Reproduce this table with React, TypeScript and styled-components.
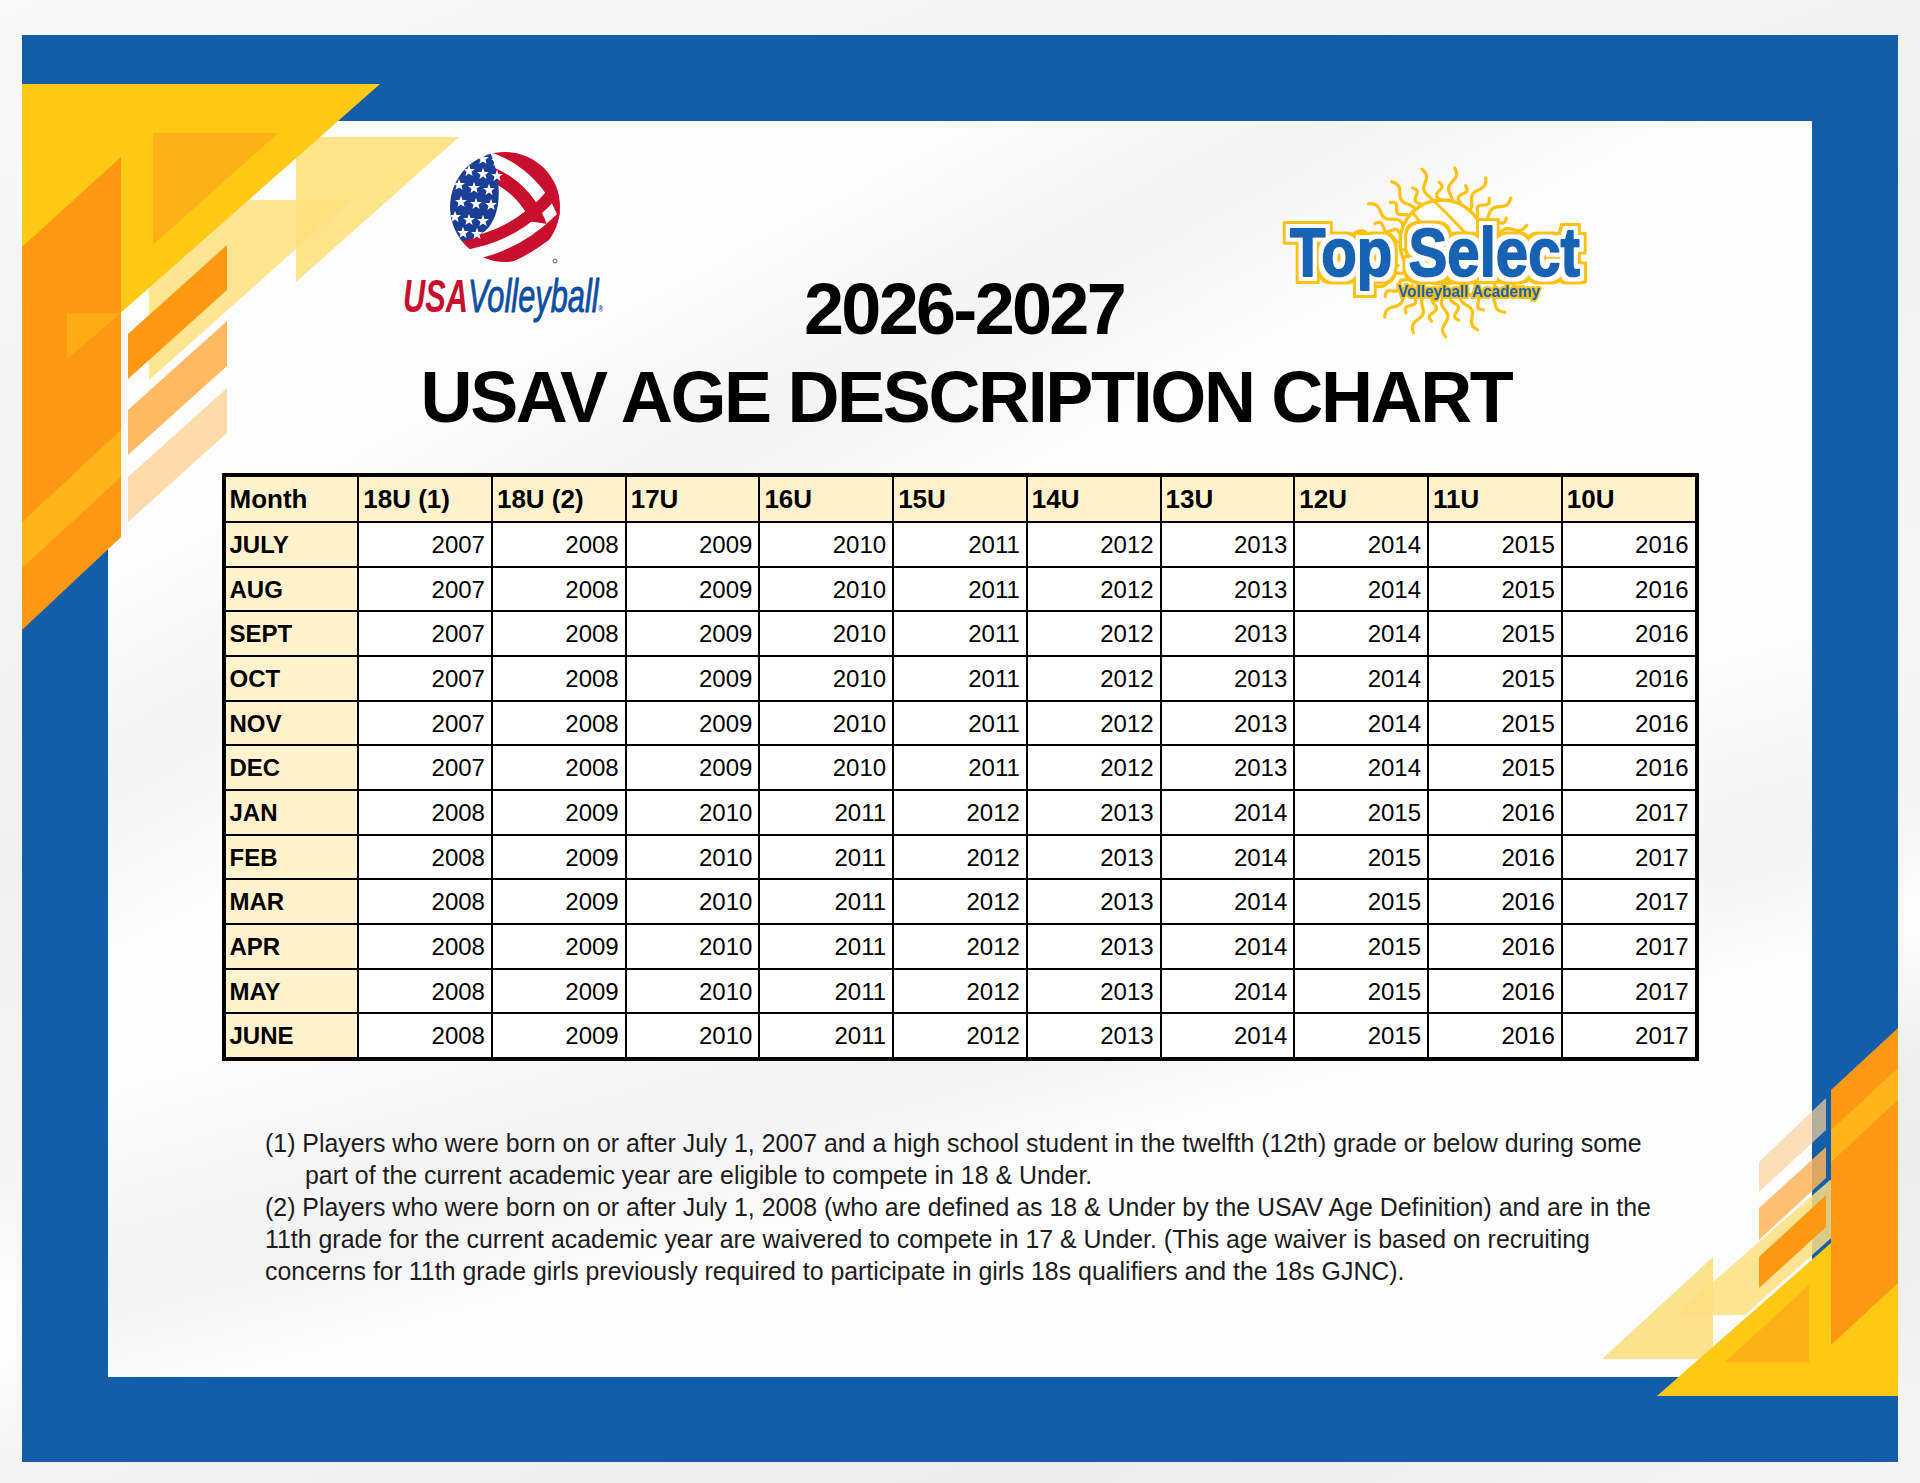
import React from 'react';
import styled, { createGlobalStyle } from 'styled-components';

const GlobalStyle = createGlobalStyle`
  html, body {
    margin: 0;
    padding: 0;
  }
  body {
    font-family: 'Liberation Sans', Arial, sans-serif;
    background: #f4f4f4;
    color: #000;
  }
`;

const Page = styled.div`
  position: relative;
  width: 1920px;
  height: 1483px;
  box-sizing: border-box;
  padding: 35px 22px 21px 22px;
  overflow: hidden;
  background:
    linear-gradient(168deg, rgba(255, 255, 255, 0) 62%, rgba(255, 255, 255, 0.9) 70%, rgba(255, 255, 255, 0) 78%),
    linear-gradient(160deg, #f9f9f9 0%, #f1f1f1 40%, #f7f7f7 60%, #ececec 85%, #f6f6f6 100%);
`;

const Frame = styled.div`
  height: 100%;
  box-sizing: border-box;
  background: #135eaa;
  padding: 86px 86px 85px 86px;
`;

const Panel = styled.div`
  height: 100%;
  display: flex;
  flex-direction: column;
  align-items: center;
  background:
    linear-gradient(152deg, rgba(0, 0, 0, 0) 20%, rgba(0, 0, 0, 0.035) 30%, rgba(0, 0, 0, 0) 40%),
    linear-gradient(165deg, rgba(0, 0, 0, 0) 55%, rgba(0, 0, 0, 0.04) 68%, rgba(0, 0, 0, 0) 76%),
    #fdfdfd;
`;

const Decor = styled.svg`
  position: absolute;
  left: 0;
  top: 0;
  z-index: 1;
  pointer-events: none;
`;

const Header = styled.div`
  position: relative;
  z-index: 2;
  width: 100%;
  display: grid;
  grid-template-columns: 1fr auto 1fr;
  align-items: start;
`;

const LeftLogo = styled.svg`
  justify-self: end;
  margin: 29px 193px 0 0;
  overflow: visible;
`;

const RightLogo = styled.svg`
  justify-self: start;
  margin: 39px 0 0 158px;
  overflow: visible;
`;

const Year = styled.h2`
  margin: 152px 0 0 8px;
  font-size: 72px;
  line-height: 72px;
  font-weight: 700;
  letter-spacing: -2.7px;
  white-space: nowrap;
`;

const Title = styled.h1`
  position: relative;
  z-index: 2;
  margin: 16px 0 0 12px;
  font-size: 72px;
  line-height: 72px;
  font-weight: 700;
  letter-spacing: -2.35px;
  white-space: nowrap;
`;

const Chart = styled.div`
  position: relative;
  z-index: 2;
  margin-top: 40px;
  width: 1477px;
  box-sizing: border-box;
  display: grid;
  grid-template-columns: repeat(11, 1fr);
  grid-template-rows: 44px repeat(12, 42.67px);
  gap: 2px;
  background: #000;
  border: 4px solid #000;
`;

const Cell = styled.div<{ $head?: boolean; $label?: boolean }>`
  background: ${({ $head, $label }) => ($head || $label ? '#fff2cc' : '#ffffff')};
  font-weight: ${({ $head, $label }) => ($head || $label ? 700 : 400)};
  font-size: ${({ $head }) => ($head ? '26px' : '24px')};
  line-height: ${({ $head }) => ($head ? '45px' : '44px')};
  text-align: ${({ $head, $label }) => ($head || $label ? 'left' : 'right')};
  padding: ${({ $head, $label }) => ($head || $label ? '0 0 0 4px' : '0 6px 0 0')};
  white-space: nowrap;
  overflow: hidden;
`;

const Notes = styled.div`
  position: relative;
  z-index: 2;
  align-self: stretch;
  margin-top: 66px;
  padding-left: 157px;
  font-size: 24.9px;
  line-height: 32px;
  color: #1c1c1c;
`;

const NoteLine = styled.div<{ $indent?: boolean }>`
  white-space: nowrap;
  padding-left: ${({ $indent }) => ($indent ? '40px' : '0')};
`;

const heads = ['Month', '18U (1)', '18U (2)', '17U', '16U', '15U', '14U', '13U', '12U', '11U', '10U'];
const months = ['JULY', 'AUG', 'SEPT', 'OCT', 'NOV', 'DEC', 'JAN', 'FEB', 'MAR', 'APR', 'MAY', 'JUNE'];

const notes = [
  { text: '(1) Players who were born on or after July 1, 2007 and a high school student in the twelfth (12th) grade or below during some' },
  { text: 'part of the current academic year are eligible to compete in 18 & Under.', indent: true },
  { text: '(2) Players who were born on or after July 1, 2008 (who are defined as 18 & Under by the USAV Age Definition) and are in the' },
  { text: '11th grade for the current academic year are waivered to compete in 17 & Under. (This age waiver is based on recruiting' },
  { text: 'concerns for 11th grade girls previously required to participate in girls 18s qualifiers and the 18s GJNC).' },
];

const star = (cx: number, cy: number, r: number) => {
  const pts: string[] = [];
  for (let i = 0; i < 10; i++) {
    const a = -Math.PI / 2 + (i * Math.PI) / 5;
    const rr = i % 2 === 0 ? r : r * 0.42;
    pts.push(`${(cx + Math.cos(a) * rr).toFixed(1)},${(cy + Math.sin(a) * rr).toFixed(1)}`);
  }
  return pts.join(' ');
};

const ring = (cx: number, cy: number, r1: number, r2: number) =>
  `M${cx - r2},${cy} A${r2},${r2} 0 1 0 ${cx + r2},${cy} A${r2},${r2} 0 1 0 ${cx - r2},${cy} Z ` +
  `M${cx - r1},${cy} A${r1},${r1} 0 1 0 ${cx + r1},${cy} A${r1},${r1} 0 1 0 ${cx - r1},${cy} Z`;

const UsaLogo = () => {
  const bx = 102;
  const by = 57;
  const red = '#c8102e';
  const blue = '#1b3f94';
  const stars = [
    [-22, -48], [-8, -46], [-36, -36], [-22, -33], [-8, -31], [-46, -22], [-31, -19],
    [-16, -17], [-44, -5], [-29, -3], [-14, -2], [-50, 10], [-36, 13], [-22, 14], [-42, 26], [-28, 27],
  ];
  return (
    <LeftLogo width={200} height={175} viewBox="0 0 200 175">
      <defs>
        <clipPath id="usaBall">
          <circle cx={bx} cy={by} r={55} />
        </clipPath>
      </defs>
      <g clipPath="url(#usaBall)">
        <rect x={40} y={0} width={130} height={120} fill="#fff" />
        <path d={ring(bx - 48, by + 48, 108, 125)} fill={red} fillRule="evenodd" />
        <path d={ring(bx - 48, by + 48, 81, 95)} fill={red} fillRule="evenodd" />
        <path
          d={`M${bx - 60},${by + 34} C${bx - 42},${by + 36} ${bx - 26},${by + 32} ${bx - 16},${by + 20} Q${bx + 20},${by + 8} ${bx + 60},${by + 22} L${bx + 60},${by + 60} L${bx - 60},${by + 60} Z`}
          fill="#fff"
        />
        <path d={ring(bx - 64, by - 106, 139, 151)} fill={red} fillRule="evenodd" />
        <path
          d={`M${bx - 16},${by - 58} C${bx - 4},${by - 30} ${bx - 2},${by + 2} ${bx - 16},${by + 20} C${bx - 26},${by + 32} ${bx - 42},${by + 36} ${bx - 60},${by + 34} L${bx - 60},${by - 60} Z`}
          fill={blue}
        />
        {stars.map(([x, y], i) => (
          <polygon key={i} points={star(bx + x, by + y, 6.2)} fill="#fff" />
        ))}
        <path d={ring(bx - 64, by - 106, 162, 176)} fill={red} fillRule="evenodd" />
      </g>
      <circle cx={152} cy={111} r={2} fill="none" stroke={blue} strokeWidth={0.8} />
      <text
        x={0}
        y={162}
        fontSize={46}
        fontStyle="italic"
        fontWeight={700}
        fontFamily="'Liberation Sans', Arial, sans-serif"
        textLength={200}
        lengthAdjust="spacingAndGlyphs"
      >
        <tspan fill={red}>USA</tspan>
        <tspan fill="#0d4ea3" fontWeight={400} stroke="#0d4ea3" strokeWidth={0.9}>
          Volleyball
        </tspan>
        <tspan fill={blue} fontSize={9} fontStyle="normal">
          ®
        </tspan>
      </text>
    </LeftLogo>
  );
};

const TopSelectLogo = () => {
  const cx = 160;
  const cy = 92;
  const sun = '#ffc20e';
  const navy = '#1563b4';
  const rays = Array.from({ length: 34 }, (_, i) => {
    const a = (i / 34) * Math.PI * 2 + 0.05;
    const r0 = 44;
    const r1 = i % 2 === 0 ? 85 : 70;
    const pts: string[] = [];
    for (let s = 0; s <= 18; s++) {
      const t = s / 18;
      const r = r0 + (r1 - r0) * t;
      const off = Math.sin(t * Math.PI * 3) * 3;
      const x = cx + Math.cos(a) * r * 1.05 - Math.sin(a) * off;
      const y = cy + Math.sin(a) * r + Math.cos(a) * off;
      pts.push(`${x.toFixed(1)},${y.toFixed(1)}`);
    }
    return `M${pts.join(' L')}`;
  });
  return (
    <RightLogo width={310} height={180} viewBox="0 0 310 180">
      <defs>
        <filter id="tsOutline" x="-10%" y="-30%" width="120%" height="160%">
          <feMorphology in="SourceAlpha" operator="dilate" radius="3.5" result="inner" />
          <feFlood floodColor="#ffffff" />
          <feComposite in2="inner" operator="in" result="white" />
          <feMorphology in="SourceAlpha" operator="dilate" radius="7" result="outer" />
          <feFlood floodColor={sun} />
          <feComposite in2="outer" operator="in" result="yellow" />
          <feMerge>
            <feMergeNode in="yellow" />
            <feMergeNode in="white" />
            <feMergeNode in="SourceGraphic" />
          </feMerge>
        </filter>
      </defs>
      {rays.map((d, i) => (
        <path key={i} d={d} fill="none" stroke={sun} strokeWidth={3.2} strokeLinecap="round" />
      ))}
      <circle cx={cx} cy={cy - 10} r={42} fill="#fff" stroke={sun} strokeWidth={3.5} />
      <path
        d={`M${cx - 30},${cy - 40} Q${cx - 6},${cy - 14} ${cx - 8},${cy + 26} M${cx - 8},${cy - 51} Q${cx + 20},${cy - 24} ${cx + 40},${cy} M${cx - 40},${cy - 2} Q${cx},${cy - 8} ${cx + 30},${cy + 22}`}
        fill="none"
        stroke={sun}
        strokeWidth={3}
      />
      <g fontFamily="'Liberation Sans', Arial, sans-serif" fontWeight={700}>
        <text
          x={8}
          y={116}
          fontSize={68}
          textLength={290}
          lengthAdjust="spacingAndGlyphs"
          fill={navy}
          stroke={navy}
          strokeWidth={2}
          strokeLinejoin="round"
          filter="url(#tsOutline)"
        >
          Top Select
        </text>
        <text x={116} y={137} fontSize={17} textLength={142} lengthAdjust="spacingAndGlyphs" fill={navy} stroke={sun} strokeWidth={4} strokeLinejoin="round" paintOrder="stroke">
          Volleyball Academy
        </text>
      </g>
    </RightLogo>
  );
};

const Corners = () => (
  <Decor width={1920} height={1483} viewBox="0 0 1920 1483">
    {/* top left */}
    <polygon points="296,137 459,137 296,282" fill="#fde07f" opacity={0.9} />
    <polygon points="229,200 351,200 149,380 149,271" fill="#fde07f" opacity={0.85} />
    <polygon points="22,84 380,84 22,400" fill="#fec915" />
    <polygon points="153,133 278,133 153,245" fill="#fdb017" />
    <polygon points="22,247 121,157 121,537 22,630" fill="#fd9813" />
    <polygon points="67,313 121,313 67,359" fill="#fdaa15" />
    <polygon points="22,522 121,430 121,477 22,568" fill="#feb41a" />
    <polygon points="128,334 227,245 227,290 128,379" fill="#fd9813" />
    <polygon points="128,410 227,321 227,366 128,455" fill="#fdba62" />
    <polygon points="128,477 227,388 227,433 128,522" fill="#fddbaa" />
    {/* bottom right */}
    <polygon points="1602,1359 1713,1359 1713,1257" fill="#fcdf80" opacity={0.9} />
    <polygon points="1675,1315 1745,1315 1867,1206 1867,1180 1830,1180" fill="#fcdf80" opacity={0.85} />
    <polygon points="1831,1205 1867,1205 1867,1236" fill="#fcdf80" opacity={0.85} />
    <polygon points="1657,1396 1898,1396 1898,1184" fill="#fec915" />
    <polygon points="1831,1090 1898,1028 1898,1283 1831,1345" fill="#fd9813" />
    <polygon points="1831,1130 1898,1068 1898,1100 1831,1162" fill="#feb41a" />
    <polygon points="1725,1362 1809,1362 1809,1285" fill="#fdb017" />
    <polygon points="1759,1257 1826,1195 1826,1227 1759,1288" fill="#fd9813" />
    <polygon points="1759,1208 1826,1147 1826,1178 1759,1240" fill="#fdb45a" opacity={0.85} />
    <polygon points="1759,1162 1826,1098 1826,1130 1759,1192" fill="#fbd09a" opacity={0.7} />
  </Decor>
);

const App = () => {
  return (
    <>
      <GlobalStyle />
      <Page>
        <Frame>
          <Panel>
            <Header>
              <UsaLogo />
              <Year>2026-2027</Year>
              <TopSelectLogo />
            </Header>
            <Title>USAV AGE DESCRIPTION CHART</Title>
            <Chart>
              {heads.map((h) => (
                <Cell key={h} $head>
                  {h}
                </Cell>
              ))}
              {months.map((m, r) => {
                const base = r < 6 ? 2007 : 2008;
                return (
                  <React.Fragment key={m}>
                    <Cell $label>{m}</Cell>
                    {heads.slice(1).map((h, c) => (
                      <Cell key={h}>{base + c}</Cell>
                    ))}
                  </React.Fragment>
                );
              })}
            </Chart>
            <Notes>
              {notes.map((n, i) => (
                <NoteLine key={i} $indent={n.indent}>
                  {n.text}
                </NoteLine>
              ))}
            </Notes>
          </Panel>
        </Frame>
        <Corners />
      </Page>
    </>
  );
};

export default App;
